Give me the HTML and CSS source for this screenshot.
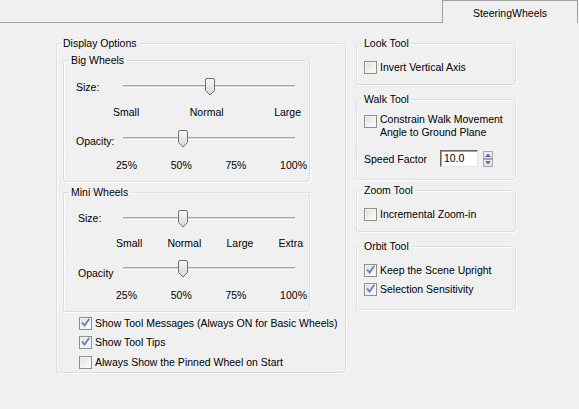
FILE: index.html
```
<!DOCTYPE html>
<html>
<head>
<meta charset="utf-8">
<link rel="stylesheet" href="styles.css">
</head>
<body>
<div class="tabbar">
  <div class="tabfill"></div>
  <div class="tab">SteeringWheels</div>
</div>
<div class="main">
  <fieldset class="group display">
    <legend class="legend-first">Display Options</legend>
    <fieldset class="group sub big">
      <legend>Big Wheels</legend>
      <div class="gbody body-big">
        <div class="srow srow-size">
          <span class="slabel lab-size">Size:</span>
          <div class="slider"><div class="track"></div>
            <svg class="thumb thumb-82" width="10" height="18" viewBox="0 0 10 18"><defs><linearGradient id="tg1" x1="0" y1="0" x2="0" y2="1"><stop offset="0" stop-color="#f7f7f7"/><stop offset="1" stop-color="#d6d6d6"/></linearGradient></defs><path d="M0.5 2 Q0.5 0.5 2 0.5 H8 Q9.5 0.5 9.5 2 V12.5 L5 17 L0.5 12.5 Z" fill="url(#tg1)" stroke="#707070"/></svg>
          </div>
        </div>
        <div class="ticks ticks-big-size"><span>Small</span><span>Normal</span><span>Large</span></div>
        <div class="srow srow-op">
          <span class="slabel lab-op">Opacity:</span>
          <div class="slider"><div class="track"></div>
            <svg class="thumb thumb-55" width="10" height="18" viewBox="0 0 10 18"><path d="M0.5 2 Q0.5 0.5 2 0.5 H8 Q9.5 0.5 9.5 2 V12.5 L5 17 L0.5 12.5 Z" fill="url(#tg1)" stroke="#707070"/></svg>
          </div>
        </div>
        <div class="ticks ticks-pct"><span>25%</span><span>50%</span><span>75%</span><span>100%</span></div>
      </div>
    </fieldset>
    <fieldset class="group sub mini">
      <legend>Mini Wheels</legend>
      <div class="gbody body-mini">
        <div class="srow srow-msize">
          <span class="slabel lab-msize">Size:</span>
          <div class="slider"><div class="track"></div>
            <svg class="thumb thumb-55" width="10" height="18" viewBox="0 0 10 18"><path d="M0.5 2 Q0.5 0.5 2 0.5 H8 Q9.5 0.5 9.5 2 V12.5 L5 17 L0.5 12.5 Z" fill="url(#tg1)" stroke="#707070"/></svg>
          </div>
        </div>
        <div class="ticks ticks-mini-size"><span>Small</span><span>Normal</span><span>Large</span><span>Extra</span></div>
        <div class="srow srow-mop">
          <span class="slabel lab-mop">Opacity</span>
          <div class="slider"><div class="track"></div>
            <svg class="thumb thumb-55" width="10" height="18" viewBox="0 0 10 18"><path d="M0.5 2 Q0.5 0.5 2 0.5 H8 Q9.5 0.5 9.5 2 V12.5 L5 17 L0.5 12.5 Z" fill="url(#tg1)" stroke="#707070"/></svg>
          </div>
        </div>
        <div class="ticks ticks-pct ticks-mpct"><span>25%</span><span>50%</span><span>75%</span><span>100%</span></div>
      </div>
    </fieldset>
    <div class="checks">
      <div class="cb cb-first"><span class="box checked"></span><span>Show Tool Messages (Always ON for Basic Wheels)</span></div>
      <div class="cb cb-gap5"><span class="box checked"></span><span>Show Tool Tips</span></div>
      <div class="cb cb-gap6"><span class="box"></span><span>Always Show the Pinned Wheel on Start</span></div>
    </div>
  </fieldset>

  <div class="rightcol">
    <fieldset class="group rg look">
      <legend>Look Tool</legend>
      <div class="gbody rbody">
        <div class="cb rcb-first"><span class="box"></span><span>Invert Vertical Axis</span></div>
      </div>
    </fieldset>
    <fieldset class="group rg walk">
      <legend>Walk Tool</legend>
      <div class="gbody rbody">
        <div class="cb cb-multi"><span class="box"></span><span>Constrain Walk Movement<br>Angle to Ground Plane</span></div>
        <div class="speed">
          <span class="speed-label">Speed Factor</span>
          <span class="input">10.0</span>
          <span class="spin">
            <svg width="10" height="16" viewBox="0 0 10 16">
              <defs><linearGradient id="sg" x1="0" y1="0" x2="0" y2="1"><stop offset="0" stop-color="#f8f8f8"/><stop offset="1" stop-color="#dcdcdc"/></linearGradient></defs>
              <rect x="0.5" y="0.5" width="9" height="7" fill="url(#sg)" stroke="#a7a7a7"/>
              <rect x="0.5" y="8.5" width="9" height="7" fill="url(#sg)" stroke="#a7a7a7"/>
              <path d="M2 6 L5 2.5 L8 6 Z" fill="#4f6fb8"/>
              <path d="M2 10 L5 13.5 L8 10 Z" fill="#4f6fb8"/>
            </svg>
          </span>
        </div>
      </div>
    </fieldset>
    <fieldset class="group rg zoom">
      <legend>Zoom Tool</legend>
      <div class="gbody rbody">
        <div class="cb rcb-first"><span class="box"></span><span>Incremental Zoom-in</span></div>
      </div>
    </fieldset>
    <fieldset class="group rg orbit">
      <legend>Orbit Tool</legend>
      <div class="gbody rbody">
        <div class="cb rcb-first"><span class="box checked"></span><span>Keep the Scene Upright</span></div>
        <div class="cb cb-gap5"><span class="box checked"></span><span>Selection Sensitivity</span></div>
      </div>
    </fieldset>
  </div>
</div>
</body>
</html>
```
FILE: styles.css
```
html, body {
  margin: 0;
  padding: 0;
  background: #f0f0f0;
}
body {
  width: 579px;
  height: 409px;
  overflow: hidden;
  font-family: "Liberation Sans", Arial, sans-serif;
  font-size: 10.5px;
  color: #000;
  line-height: 14px;
}

/* tab bar */
.tabbar {
  display: flex;
  height: 23px;
}
.tabfill {
  flex: 1;
  border-bottom: 1px solid #a0a0a0;
}
.tab {
  width: 136px;
  height: 23px;
  margin-right: 1px;
  border: 1px solid #a0a0a0;
  border-bottom: none;
  box-sizing: border-box;
  display: flex;
  align-items: center;
  justify-content: center;
  padding-top: 1px;
  background: #f0f0f0;
}

.main {
  display: flex;
  align-items: flex-start;
  padding-top: 13px;
  padding-left: 56px;
}

/* group boxes */
fieldset.group {
  margin: 0;
  padding: 0;
  border: 1px solid #d5dfe5;
  border-radius: 3px;
  box-shadow: inset 1px 1px 0 #fff, 1px 1px 0 #fff;
  min-width: 0;
  box-sizing: border-box;
}
fieldset.group > legend {
  padding: 0 2px;
  margin-left: 5px;
  line-height: 14px;
}
fieldset.group > legend.legend-first {
  margin-left: 4px;
}

fieldset.display {
  width: 290px;
  padding-bottom: 3px;
}
fieldset.sub {
  width: 247px;
  margin-left: 6px;
  margin-top: 3px;
}
.gbody {
  padding-left: 12px;
  padding-bottom: 9px;
}
.body-mini {
  padding-left: 14px;
}

/* slider rows */
.srow {
  display: flex;
  height: 18px;
}
.slabel {
  width: 47px;
  flex: none;
  line-height: 14px;
}
.body-mini .slabel {
  width: 45px;
}
.srow-size { margin-top: 11px; }
.srow-op { margin-top: 11px; }
.srow-msize { margin-top: 11px; }
.srow-mop { margin-top: 10px; }
.lab-size { margin-top: 2px; }
.lab-op { margin-top: 4px; }
.lab-msize { margin-top: 1px; }
.lab-mop { margin-top: 6px; }

.slider {
  position: relative;
  width: 172px;
  height: 18px;
}
.track {
  position: absolute;
  left: 0;
  right: 0;
  top: 7px;
  height: 1px;
  border-top: 1px solid #a8a8a8;
  border-bottom: 1px solid #ffffff;
  background: #d6d6d6;
}
.thumb {
  position: absolute;
  top: 0;
  display: block;
}
.thumb-82 { left: 82px; }
.thumb-55 { left: 55px; }

/* ticks */
.ticks {
  display: flex;
  justify-content: space-between;
  line-height: 14px;
}
.ticks-big-size {
  margin-top: 9px;
  margin-left: 37px;
  width: 188px;
}
.ticks-pct {
  margin-top: 10px;
  margin-left: 40px;
  width: 191px;
}
.ticks-mini-size {
  margin-top: 8px;
  margin-left: 38px;
  width: 187px;
}
.ticks-mpct {
  margin-left: 38px;
}

/* checkboxes */
.checks {
  padding-left: 22px;
  margin-top: 4px;
}
.cb {
  display: flex;
  align-items: center;
  line-height: 14px;
  white-space: nowrap;
}
.cb-gap5 { margin-top: 5px; }
.cb-gap6 { margin-top: 6px; }
.box {
  width: 13px;
  height: 13px;
  flex: none;
  box-sizing: border-box;
  margin-right: 3px;
  border: 1px solid #8f8f8f;
  background: linear-gradient(135deg, #dcdcdc 0%, #f2f2f2 60%, #fbfbfb 100%);
  box-shadow: inset 0 0 0 1px #f4f4f4;
  position: relative;
}
.box.checked::after {
  content: "";
  position: absolute;
  left: 1px;
  top: 0px;
  width: 9px;
  height: 10px;
  background: url("data:image/svg+xml;utf8,<svg xmlns='http://www.w3.org/2000/svg' width='9' height='10' viewBox='0 0 9 10'><path d='M1.5 5.2 L3.6 7.6 L7.8 1.4' fill='none' stroke='%236682bb' stroke-width='1.8' stroke-linecap='square'/></svg>") no-repeat;
}

/* right column */
.rightcol {
  width: 160px;
  margin-left: 10px;
  display: flex;
  flex-direction: column;
}
fieldset.rg {
  width: 160px;
}
.rbody {
  padding-left: 7px;
  padding-bottom: 10px;
}
.rcb-first { margin-top: 10px; }
fieldset.walk { margin-top: 7px; }
.walk .rbody { padding-bottom: 12px; }
fieldset.zoom { margin-top: 3px; }
fieldset.orbit { margin-top: 7px; }
.orbit .rbody { padding-bottom: 13px; }

.cb-multi {
  align-items: flex-start;
  line-height: 13px;
  margin-top: 7px;
}
.cb-multi .box { margin-top: 2px; }

.speed {
  display: flex;
  align-items: center;
  margin-top: 11px;
  height: 17px;
}
.speed-label {
  width: 76px;
  flex: none;
  padding-top: 1px;
}
.input {
  width: 38px;
  height: 17px;
  box-sizing: border-box;
  background: #fff;
  border: 1px solid;
  border-color: #646464 #e3e3e3 #e3e3e3 #646464;
  box-shadow: inset 1px 1px 0 #a0a0a0;
  padding-left: 3px;
  line-height: 14px;
}
.spin {
  margin-left: 5px;
  display: flex;
}
.spin svg { display: block; }
```
